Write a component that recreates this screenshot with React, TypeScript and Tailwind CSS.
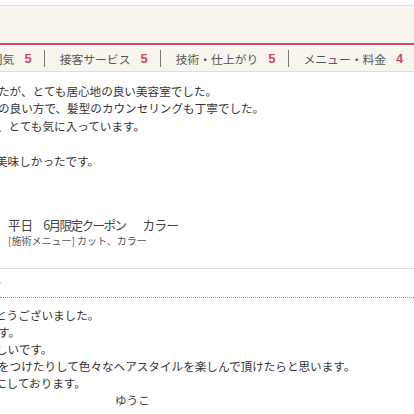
const jp = "font-['Noto_Sans_CJK_JP','Noto_Sans',sans-serif]"

const ratings = [
	{ label: '雰囲気', score: 5 },
	{ label: '接客サービス', score: 5 },
	{ label: '技術・仕上がり', score: 5 },
	{ label: 'メニュー・料金', score: 4 },
]

function RatingBar() {
	return (
		<div className="h-[27px] bg-[#f8f5ee] border-b border-[#dddddd] flex items-center overflow-hidden">
			<div className="flex items-center ml-[-21px] shrink-0">
				{ratings.map((r, i) => (
					<div key={r.label} className="flex items-center">
						{i > 0 && <span className="w-px h-[17px] bg-[#777] ml-[12px] mr-[15px]" />}
						<span className="text-[11.8px] leading-[17px] text-[#555] whitespace-nowrap">{r.label}</span>
						<span className="ml-[10px] text-[13px] leading-[17px] font-bold text-[#cc4a6a] font-['Liberation_Sans',sans-serif]">
							{r.score}
						</span>
					</div>
				))}
			</div>
		</div>
	)
}

export default function App() {
	return (
		<div className={`w-[414px] h-[414px] overflow-hidden bg-white ${jp}`}>
			<div className="h-[5px]" />
			<div className="h-[38px] border-t border-[#dddddd] bg-[#f8f5ee]" />
			<div className="h-[2px] bg-[#c9506c]" />
			<RatingBar />

			<div className="pt-[11px] ml-[-2px] text-[11.6px] leading-[17.4px] text-[#333] whitespace-nowrap">
				<p>たが、とても居心地の良い美容室でした。</p>
				<p>の良い方で、髪型のカウンセリングも丁寧でした。</p>
				<p className="ml-[-1px]">、とても気に入っています。</p>
				<p>&nbsp;</p>
				<p className="ml-[-2px]">美味しかったです。</p>
			</div>

			<div className="mt-[46px] pl-[8px] whitespace-nowrap">
				<p className="flex text-[12.6px] leading-[17px] text-[#444]">
					<span>平日</span>
					<span className="ml-[10px] tracking-[-1.6px]">6月限定クーポン</span>
					<span className="ml-[17px] tracking-[-0.6px]">カラー</span>
				</p>
				<p className="text-[10px] leading-[15px] text-[#555]">[施術メニュー] カット、カラー</p>
			</div>

			<div className="mt-[20px] border-t border-[#dddddd]" />
			<div className="h-[28px] flex items-center">
				<span className="w-px h-[2px] bg-[#f0c4cf]" />
			</div>
			<div className="border-t border-dotted border-[#999]" />

			<div className="pt-[9px] ml-[-2px] text-[11.6px] leading-[17px] text-[#333] whitespace-nowrap">
				<p className="ml-[-3px]">とうございました。</p>
				<p>す。</p>
				<p className="ml-[-2px]">しいです。</p>
				<p>をつけたりして色々なヘアスタイルを楽しんで頂けたらと思います。</p>
				<p className="ml-[-3px]">にしております。</p>
				<p className="pl-[117px]">ゆうこ</p>
			</div>
		</div>
	)
}
